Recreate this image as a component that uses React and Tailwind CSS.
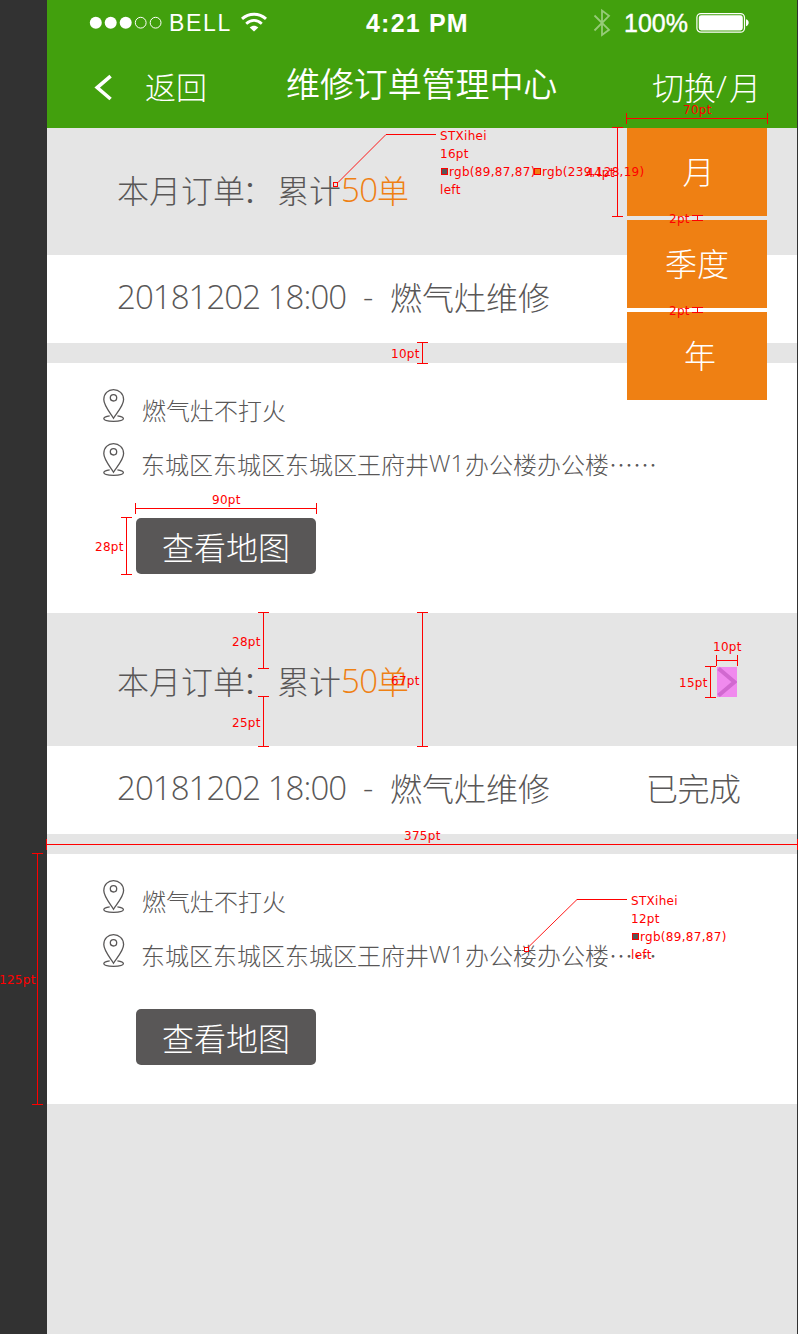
const H = [
  { y: 118, a: 626, b: 767 },
  { y: 508, a: 135, b: 316 },
  { y: 660, a: 716, b: 737 },
  { y: 844, a: 46, b: 797 },
];

const V = [
  { x: 617, a: 127, b: 216 },
  { x: 697, a: 215, b: 220 },
  { x: 697, a: 307, b: 312 },
  { x: 422, a: 342, b: 363 },
  { x: 126, a: 517, b: 574 },
  { x: 263, a: 612, b: 668 },
  { x: 263, a: 696, b: 746 },
  { x: 422, a: 612, b: 746 },
  { x: 710, a: 666, b: 697 },
  { x: 37, a: 853, b: 1104 },
];

const LABELS = [
  { x: 683, y: 101, t: "70pt" },
  { x: 586, y: 164, t: "44pt" },
  { x: 669, y: 210, t: "2pt" },
  { x: 669, y: 302, t: "2pt" },
  { x: 391, y: 345, t: "10pt" },
  { x: 212, y: 491, t: "90pt" },
  { x: 95, y: 538, t: "28pt" },
  { x: 232, y: 633, t: "28pt" },
  { x: 232, y: 714, t: "25pt" },
  { x: 391, y: 672, t: "67pt" },
  { x: 713, y: 638, t: "10pt" },
  { x: 679, y: 674, t: "15pt" },
  { x: 404, y: 827, t: "375pt" },
  { x: -1, y: 971, t: "125pt" },
  { x: 440, y: 127, t: "STXihei" },
  { x: 440, y: 145, t: "16pt" },
  { x: 449, y: 163, t: "rgb(89,87,87)" },
  { x: 542, y: 163, t: "rgb(239,128,19)" },
  { x: 440, y: 181, t: "left" },
  { x: 631, y: 892, t: "STXihei" },
  { x: 631, y: 910, t: "12pt" },
  { x: 640, y: 928, t: "rgb(89,87,87)" },
  { x: 631, y: 946, t: "left" },
];

function Annotations() {
  return (
    <div className="pointer-events-none absolute inset-0 overflow-hidden">
      <svg className="absolute inset-0" width="798" height="1334" viewBox="0 0 798 1334">
        <g fill="#f00" shapeRendering="crispEdges">
          {H.map((m) => (
            <g key={m.y}>
              <rect x={m.a} y={m.y} width={m.b - m.a + 1} height="1" />
              <rect x={m.a} y={m.y - 5} width="1" height="11" />
              <rect x={m.b} y={m.y - 5} width="1" height="11" />
            </g>
          ))}
          {V.map((m) => (
            <g key={`${m.x}-${m.a}`}>
              <rect x={m.x} y={m.a} width="1" height={m.b - m.a + 1} />
              <rect x={m.x - 5} y={m.a} width="11" height="1" />
              <rect x={m.x - 5} y={m.b} width="11" height="1" />
            </g>
          ))}
          <rect x="386" y="134" width="50" height="1" />
          <rect x="577" y="899" width="50" height="1" />
        </g>
        <path d="M338 182.5L386 134.5M528 947.5L577 899.5" stroke="#f00" strokeWidth="0.9" fill="none" />
        <g stroke="#f00" shapeRendering="crispEdges">
          <rect x="333.5" y="182.5" width="4" height="4" fill="#e5e5e5" />
          <rect x="524.5" y="947.5" width="4" height="4" fill="#fff" />
          <rect x="441.5" y="168.5" width="6" height="6" fill="#595757" />
          <rect x="534.5" y="168.5" width="6" height="6" fill="#ef8013" />
          <rect x="632.5" y="933.5" width="6" height="6" fill="#595757" />
        </g>
      </svg>
      {LABELS.map((l) => (
        <span
          key={`${l.x}-${l.y}`}
          className="absolute whitespace-nowrap font-['DejaVu_Sans',sans-serif] text-[12px] font-normal leading-[18px] tracking-[0.3px] text-[#ff0000]"
          style={{ left: l.x, top: l.y }}
        >
          {l.t}
        </span>
      ))}
    </div>
  );
}

function StatusBar() {
  return (
    <div className="flex h-[46px] items-center text-white">
      <svg className="ml-[42px] shrink-0" width="74" height="46" viewBox="0 0 74 46">
        <g fill="#fff">
          <circle cx="6.8" cy="22.7" r="6" />
          <circle cx="21.7" cy="22.7" r="6" />
          <circle cx="36.7" cy="22.7" r="6" />
        </g>
        <g fill="none" stroke="#fff" strokeWidth="1">
          <circle cx="51.7" cy="22.7" r="5.4" />
          <circle cx="66.6" cy="22.7" r="5.4" />
        </g>
      </svg>
      <span className="ml-[6px] w-[71px] whitespace-nowrap font-['Liberation_Sans',sans-serif] text-[23px] leading-[46px] tracking-[1.7px]">BELL</span>
      <svg className="shrink-0" width="28" height="46" viewBox="0 0 28 46">
        <g fill="none" stroke="#fff">
          <path d="M2 18.8C9 12.6 19 12.6 26 18.8" strokeWidth="3" />
          <path d="M6.2 23.7C11 19.4 17 19.4 21.8 23.7" strokeWidth="2.8" />
        </g>
        <path d="M9.7 27.6C12.4 25.2 15.6 25.2 18.3 27.6L14 31.4Z" fill="#fff" />
      </svg>
      <span className="ml-[98px] w-[219px] font-['Liberation_Sans',sans-serif] text-[25px] font-bold leading-[46px] tracking-[1.2px]">4:21 PM</span>
      <svg className="ml-[8px] shrink-0" width="18" height="46" viewBox="0 0 18 46">
        <path d="M1.5 15.5L16 29.8L9 35V10.5L16 15.8L1.5 30.5" fill="none" stroke="#96cb78" strokeWidth="1.8" />
      </svg>
      <span className="ml-[13px] w-[72px] font-['Liberation_Sans',sans-serif] text-[25px] leading-[46px] [-webkit-text-stroke:0.4px_white]">100%</span>
      <svg className="shrink-0" width="54" height="46" viewBox="0 0 54 46">
        <rect x="0.9" y="13.6" width="47.6" height="18.6" rx="4" fill="none" stroke="#fff" strokeWidth="1.2" />
        <rect x="2.8" y="15.3" width="44" height="15.2" rx="2.4" fill="#fff" />
        <path d="M50 19.3C53.6 20 53.6 25.4 50 26.2Z" fill="#fff" />
      </svg>
    </div>
  );
}

function Header() {
  return (
    <header className="h-[128px] bg-[#42a00d] text-white">
      <StatusBar />
      <div className="flex h-[82px] items-start">
        <svg className="ml-[47px] mt-[28px] shrink-0" width="20" height="28" viewBox="0 0 20 28">
          <path d="M16.6 2.2L3.2 13.6L16.6 25" fill="none" stroke="#fff" strokeWidth="3.6" />
        </svg>
        <span className="ml-[31px] mt-[22px] w-[141px] text-[31px] leading-[36px]">返回</span>
        <h1 className="mt-[19px] w-[366px] whitespace-nowrap text-[34px] font-[350] leading-[36px] tracking-[-0.1px]">维修订单管理中心</h1>
        <span className="mt-[22px] flex whitespace-nowrap text-[32px] leading-[36px]">
          切换<span className="w-[13px] font-['Open_Sans',sans-serif]">/</span>月
        </span>
      </div>
    </header>
  );
}

function PeriodMenu() {
  return (
    <div className="absolute left-[627px] top-[128px] flex w-[140px] flex-col gap-1 text-center text-[32px] leading-[85px] text-white">
      <div className="h-[88px] bg-[#ef8013] pl-[3px]">月</div>
      <div className="h-[88px] bg-[#ef8013]">季度</div>
      <div className="h-[88px] bg-[#ef8013] pl-[6px]">年</div>
    </div>
  );
}

function Pin() {
  return (
    <svg className="shrink-0" width="22" height="34" viewBox="0 0 22 34" fill="none" stroke="#595757" strokeWidth="1.3">
      <path d="M10.5 29.2C8.5 25.4 0.8 17.2 0.8 10.6C0.8 4.6 5 0.7 10.5 0.7S20.6 4.6 20.6 10.6C20.6 17.2 12.6 25.4 10.5 29.2Z" />
      <circle cx="10.5" cy="8.8" r="3.2" />
      <path d="M6.7 26.8C2.8 27.3 0.8 28.4 0.8 29.6C0.8 31.3 5 32.4 10.5 32.4S20.4 31.3 20.4 29.6C20.4 28.4 18.2 27.3 14.4 26.8" />
    </svg>
  );
}

function Summary({ className, children }) {
  return (
    <div className={className}>
      <div className="flex flex-1 whitespace-nowrap text-[32px] leading-[40px]">
        <span className="flex w-[160px]">
          本月订单<span className="-ml-[3px]">：</span>
        </span>
        <span className="w-[64px]">累计</span>
        <span className="w-[36px] font-['Open_Sans',sans-serif] text-[33px] leading-[42px] tracking-[-0.6px] text-[#ef8013]">50</span>
        <span className="text-[#ef8013]">单</span>
      </div>
      {children}
    </div>
  );
}

function Order({ status }) {
  return (
    <>
      <div className="flex h-[88px] whitespace-nowrap bg-white pl-[70px] pt-[21px] text-[32px] leading-[40px]">
        <span className="w-[246px] font-['Open_Sans',sans-serif] text-[33px] leading-[41px] tracking-[-0.95px]">20181202 18:00</span>
        <span className="w-[27px] font-['Open_Sans',sans-serif]">-</span>
        <span className="w-[256px]">燃气灶维修</span>
        <span className="tracking-[-0.5px]">{status}</span>
      </div>
      <div className="h-[20px] bg-[#e5e5e5]" />
      <div className="h-[250px] bg-white pl-[56px] pt-[26px] text-[24px] leading-[34px]">
        <div className="flex h-[54px] items-start">
          <Pin />
          <span className="ml-[17px] mt-[4px]">燃气灶不打火</span>
        </div>
        <div className="flex h-[54px] items-start whitespace-nowrap">
          <Pin />
          <span className="ml-[16px] mt-[4px] w-[288px]">东城区东城区东城区王府井</span>
          <span className="mt-[3px] w-[36px] font-['Open_Sans',sans-serif]">W1</span>
          <span className="mt-[4px]">办公楼办公楼……</span>
        </div>
        <button className="ml-[33px] mt-[21px] block h-[56px] w-[180px] rounded-[5px] bg-[#595757] text-[32px] leading-[52px] text-white">查看地图</button>
      </div>
    </>
  );
}

export default function App() {
  return (
    <div className="relative flex h-[1334px] w-[798px] overflow-hidden bg-[#323232] pl-[47px] font-['Noto_Sans_CJK_SC',sans-serif] font-light text-[#595757]">
      <main className="w-[750px] bg-[#e5e5e5]">
        <Header />
        <Summary className="flex h-[127px] pl-[70px] pt-[41px]" />
        <Order />
        <Summary className="flex h-[133px] pl-[70px] pt-[47px]">
          <span className="mr-[60px] mt-[7px] h-[30px] w-[20px] bg-[#f08aee]">
            <svg width="20" height="30" viewBox="0 0 20 30">
              <path d="M1.5 1.5L17.5 15L1.5 28.5" fill="none" stroke="#d169d0" strokeWidth="4" />
            </svg>
          </span>
        </Summary>
        <Order status="已完成" />
      </main>
      <PeriodMenu />
      <Annotations />
    </div>
  );
}
